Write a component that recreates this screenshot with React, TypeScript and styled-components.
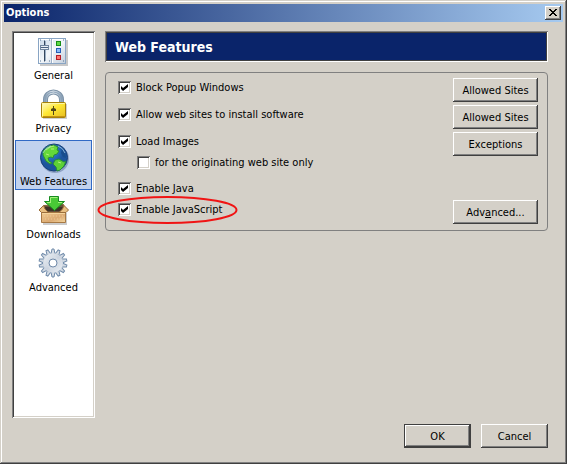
import React from "react";
import styled, { createGlobalStyle, css } from "styled-components";

const face = "#d4d0c8";
const shadow = "#808080";
const dark = "#404040";
const light = "#ffffff";
const navy = "#0a246a";

const GlobalStyle = createGlobalStyle`
  *, *::before, *::after { box-sizing: border-box; }
  body { margin: 0; background: ${face}; }
  body, button, input {
    font-family: "DejaVu Sans Condensed", Tahoma, "Noto Sans", sans-serif;
    font-size: 11px;
    line-height: 13px;
    color: #000;
  }
`;

const raised = css`
  border: 0;
  background: ${face};
  box-shadow: inset -1px -1px ${dark}, inset 1px 1px ${light}, inset -2px -2px ${shadow};
`;

const Dialog = styled.main`
  display: flex;
  flex-direction: column;
  min-height: 100vh;
  padding: 4px;
  background: ${face};
  box-shadow: inset -1px -1px ${dark}, inset 1px 1px ${face}, inset -2px -2px ${shadow},
    inset 2px 2px ${light};
`;

const TitleBar = styled.header`
  display: flex;
  align-items: center;
  justify-content: space-between;
  height: 18px;
  padding: 0 2px;
  background: linear-gradient(to right, ${navy}, #a6caf0);
`;

const Title = styled.h1`
  margin: 0;
  font-size: 11px;
  font-weight: bold;
  line-height: 18px;
  color: #fff;
`;

const CloseButton = styled.button`
  ${raised}
  display: grid;
  place-items: center;
  width: 16px;
  height: 14px;
  padding: 0 1px 1px 0;
`;

const Content = styled.div`
  display: flex;
  flex: 1;
  gap: 10px;
  padding: 9px 15px 0 8px;
`;

const Sidebar = styled.nav`
  display: flex;
  flex-direction: column;
  gap: 3px;
  width: 83px;
  min-height: 387px;
  padding: 3px;
  background: #fff;
  box-shadow: inset 1px 1px ${shadow}, inset -1px -1px ${light}, inset 2px 2px ${dark},
    inset -2px -2px ${face};
`;

const Category = styled.button<{ $active?: boolean }>`
  display: flex;
  flex-direction: column;
  align-items: center;
  gap: 1px;
  height: 50px;
  padding: 1px 0;
  border: 1px solid ${(p) => (p.$active ? "#316ac5" : "transparent")};
  background: ${(p) => (p.$active ? "#c1d2ee" : "transparent")};
  white-space: nowrap;

  svg { display: block; flex: none; }
`;

const Panel = styled.section`
  display: flex;
  flex: 1;
  flex-direction: column;
  gap: 10px;
  min-width: 0;
`;

const Heading = styled.h2`
  margin: 0;
  padding: 1px 10px 0;
  font-size: 14px;
  font-weight: bold;
  line-height: 30px;
  color: #fff;
  background: ${navy};
  box-shadow: inset 1px 1px ${shadow}, inset -1px -1px ${light}, inset 2px 2px ${dark},
    inset -2px -2px ${dark};
`;

const Group = styled.div`
  display: flex;
  flex-direction: column;
  gap: 3px;
  padding: 5px 9px 6px 12px;
  border: 1px solid ${shadow};
  border-radius: 4px;
`;

const Row = styled.div`
  display: flex;
  align-items: flex-start;
  justify-content: space-between;
  height: 24px;
`;

const NestedRow = styled.div`
  display: flex;
  margin: -3px 0 10px;
  padding-left: 19px;
`;

const JavaRows = styled.div`
  display: flex;
  align-items: flex-end;
  justify-content: space-between;
`;

const JavaOptions = styled.div`
  display: flex;
  flex-direction: column;
  gap: 8px;
  padding-bottom: 8px;
`;

const CheckLabel = styled.label<{ $offset?: boolean }>`
  position: relative;
  display: flex;
  align-items: center;
  gap: 5px;
  margin-top: ${(p) => (p.$offset ? "3px" : "0")};
  white-space: nowrap;
`;

const CheckBox = styled.input`
  appearance: none;
  width: 13px;
  height: 13px;
  margin: 0;
  background: #fff;
  box-shadow: inset 1px 1px ${shadow}, inset -1px -1px ${light}, inset 2px 2px ${dark},
    inset -2px -2px ${face};

  &:checked::before {
    content: "";
    display: block;
    width: 7px;
    height: 7px;
    margin: 3px;
    background: #000;
    clip-path: polygon(0 29%, 29% 57%, 100% 0, 100% 43%, 29% 100%, 0 71%);
  }
`;

const Highlight = styled.svg`
  position: absolute;
  top: -8px;
  left: -21px;
  width: 141px;
  height: 30px;
  overflow: visible;
  pointer-events: none;
`;

const PushButton = styled.button<{ $width: number; $primary?: boolean }>`
  ${raised}
  width: ${(p) => p.$width}px;
  height: 24px;
  padding: 0;
  white-space: nowrap;
  ${(p) =>
    p.$primary &&
    css`
      box-shadow: inset 0 0 0 1px ${dark}, inset -2px -2px ${dark}, inset 2px 2px ${light},
        inset -3px -3px ${shadow};
    `}
`;

const Footer = styled.footer`
  display: flex;
  justify-content: flex-end;
  gap: 10px;
  padding: 6px 15px 12px;
`;

const GeneralIcon = () => (
  <svg width="32" height="32" viewBox="0 0 32 32" aria-hidden="true">
    <defs>
      <linearGradient id="panel" x2="1" y2="1">
        <stop stopColor="#c8d7e8" /><stop offset=".5" stopColor="#f2f6fa" /><stop offset="1" stopColor="#c4cedb" />
      </linearGradient>
    </defs>
    <path d="M2 29h27V4" fill="none" stroke="#c8c8c8" strokeWidth="2" />
    <rect x=".5" y="2.5" width="27" height="25" fill="url(#panel)" stroke="#89a5c4" />
    <path d="M1.5 26.5v-23H26" fill="none" stroke="#fff" />
    <path d="M13.5 3v24" stroke="#9eb1c8" /><path d="M14.5 3v24" stroke="#fff" />
    <path d="M6.5 4.5v21" stroke="#34465e" /><path d="M7.5 5v20" stroke="#9cb0c6" />
    <rect x="2.5" y="9.5" width="8" height="4" fill="#e8eef5" stroke="#71859f" />
    <path d="M3 11.5h7" stroke="#4c6280" />
    <rect x="18" y="5" width="5" height="5" fill="#168e16" /><rect x="19" y="6" width="3" height="3" fill="#60d947" />
    <rect x="18" y="12" width="5" height="5" fill="#245fb8" /><rect x="19" y="13" width="3" height="3" fill="#87baf8" />
    <rect x="18" y="19" width="5" height="5" fill="#b51d27" /><rect x="19" y="20" width="3" height="3" fill="#ff7770" />
    <path d="M2 4h1M11 4h1M2 25h1M11 25h1M25 4h1M25 25h1" stroke="#53718e" />
  </svg>
);

const PrivacyIcon = () => (
  <svg width="32" height="32" viewBox="0 0 32 32" aria-hidden="true">
    <defs>
      <linearGradient id="brass" x2="1" y2="1">
        <stop stopColor="#fffbd2" /><stop offset=".45" stopColor="#ffe936" /><stop offset="1" stopColor="#e6bc20" />
      </linearGradient>
      <linearGradient id="steel" x2="1">
        <stop stopColor="#8fa5ba" /><stop offset=".45" stopColor="#e8eff4" /><stop offset="1" stopColor="#8fa5ba" />
      </linearGradient>
    </defs>
    <path d="M5 29h23V15" fill="none" stroke="#d0d0d0" strokeWidth="2" />
    <path d="M7.5 16V10.500a8 7.500 0 0 1 16 0V16" fill="none" stroke="#7c92a8" strokeWidth="5" />
    <path d="M7.5 16V10.500a8 7.500 0 0 1 16 0V16" fill="none" stroke="url(#steel)" strokeWidth="3" />
    <path d="M7.5 14V10.500a8 7.500 0 0 1 16 0V14" fill="none" stroke="#8aa1b8" />
    <rect x="3.5" y="13.5" width="24" height="15" rx="1" fill="url(#brass)" stroke="#a78208" />
    <path d="M4.5 27V14.5h22" fill="none" stroke="#fff6a2" />
    <path d="M5 27.5h22" stroke="#c49215" />
    <path d="M15 17h1v2l2 1v2h-2v4h-1v-4h-2v-2l2-1z" fill="#514619" />
  </svg>
);

const GlobeIcon = () => (
  <svg width="32" height="32" viewBox="0 0 32 32" aria-hidden="true">
    <defs>
      <radialGradient id="ocean" cx=".35" cy=".25">
        <stop stopColor="#8fc2ee" /><stop offset=".5" stopColor="#2873c4" /><stop offset="1" stopColor="#1d559c" />
      </radialGradient>
    </defs>
    <circle cx="17" cy="17" r="14" fill="#788db0" opacity=".7" />
    <circle cx="16" cy="15.5" r="13.5" fill="url(#ocean)" stroke="#173f78" />
    <path d="M7 7l4-3 5-1 4 2-1 3 2 1-2 3-3 1-1 3-2-1-3 1 1 3 3 2-2 1-4-3-3-6v-4z" fill="#64d83b" stroke="#2b8e35" />
    <path d="M17 18l4-1 5 3 2-1-2 5-4 4-3 1-1-4-3-3z" fill="#5ed036" stroke="#26883e" />
    <path d="M24 7l3 4 1 5-3-1-2-4z" fill="#174d8d" />
    <path d="M8 8l4-3 4-1M8 12l3 1M13 7h3M20 20l3 1" fill="none" stroke="#b4ef7a" />
    <path d="M5 11a12 12 0 0 1 8-7M20 4a12 12 0 0 1 7 7" fill="none" stroke="#b5d8ef" opacity=".7" />
  </svg>
);

const DownloadIcon = () => (
  <svg width="32" height="32" viewBox="0 0 32 32" aria-hidden="true">
    <defs>
      <linearGradient id="carton" y2="1" x2="1">
        <stop stopColor="#f0ca91" /><stop offset=".6" stopColor="#dcab74" /><stop offset="1" stopColor="#f5d79f" />
      </linearGradient>
    </defs>
    <path d="M5 29h23V18" fill="none" stroke="#ccc" strokeWidth="2" />
    <path d="M5.5 10.5l20-1 2 6v5h-24v-5z" fill="#65503a" stroke="#8a6338" />
    <path d="M7 13h18M6 15h20" stroke="#3e3128" strokeWidth="2" />
    <path d="M3.5 17.5h24v10h-24z" fill="url(#carton)" stroke="#a77945" />
    <path d="M5.5 10.5L1 15l2.500 2.500h7L7 14zM26 10.500l4.500 4.500-2.500 2.500h-7l3.500-3.500z" fill="#e8bf82" stroke="#9b6d3b" />
    <path d="M4 18.5h23" stroke="#f4d49d" /><path d="M6 21h20M7 24h17" stroke="#edca97" strokeDasharray="1 2" />
    <path d="M11.5 1.5h9v5h6l-10 9-10-9h5z" fill="#49c936" stroke="#178b21" />
    <path d="M12.5 7V2.5h7M9 7.5h4M20 7.5h4" fill="none" stroke="#a5f07b" />
  </svg>
);

const teeth = Array.from({ length: 14 }, (_, i) => (i * 360) / 14);

const GearIcon = () => (
  <svg width="32" height="32" viewBox="0 0 32 32" aria-hidden="true">
    <defs>
      <linearGradient id="metal" x2="1" y2="1">
        <stop stopColor="#f0f3f6" /><stop offset=".5" stopColor="#ccd4df" /><stop offset="1" stopColor="#eef2f6" />
      </linearGradient>
    </defs>
    <g fill="#d3dae3" stroke="#708baa">
      {teeth.map((angle) => (
        <path key={angle} d="M13 6l1-5h2l1 5z" transform={`rotate(${angle} 15 15)`} />
      ))}
    </g>
    <circle cx="15" cy="15" r="10" fill="url(#metal)" />
    <circle cx="15" cy="15" r="6" fill="none" stroke="#d9e1e9" />
    <circle cx="15" cy="15" r="4" fill="#fff" stroke="#718baa" />
  </svg>
);

const categories = [
  { name: "General", Icon: GeneralIcon },
  { name: "Privacy", Icon: PrivacyIcon },
  { name: "Web Features", Icon: GlobeIcon },
  { name: "Downloads", Icon: DownloadIcon },
  { name: "Advanced", Icon: GearIcon },
];

const settings = [
  { id: "popups", label: "Block Popup Windows", action: "Allowed Sites" },
  { id: "install", label: "Allow web sites to install software", action: "Allowed Sites" },
  { id: "images", label: "Load Images", action: "Exceptions" },
];

export default function App() {
  return (
    <>
      <GlobalStyle />
      <Dialog>
        <TitleBar>
          <Title>Options</Title>
          <CloseButton aria-label="Close">
            <svg width="8" height="7" viewBox="0 0 8 7" shapeRendering="crispEdges" aria-hidden="true">
              <path d="M0 0h2v1h1v1h2V1h1V0h2v1H7v1H6v1H5v1h1v1h1v1h1v1H6V6H5V5H3v1H2v1H0V6h1V5h1V4h1V3H2V2H1V1H0z" />
            </svg>
          </CloseButton>
        </TitleBar>
        <Content>
          <Sidebar aria-label="Categories">
            {categories.map(({ name, Icon }) => (
              <Category key={name} $active={name === "Web Features"}>
                <Icon />
                {name}
              </Category>
            ))}
          </Sidebar>
          <Panel>
            <Heading>Web Features</Heading>
            <Group>
              {settings.map(({ id, label, action }) => (
                <Row key={id}>
                  <CheckLabel htmlFor={id} $offset>
                    <CheckBox id={id} type="checkbox" defaultChecked />
                    {label}
                  </CheckLabel>
                  <PushButton $width={85}>{action}</PushButton>
                </Row>
              ))}
              <NestedRow>
                <CheckLabel htmlFor="originating">
                  <CheckBox id="originating" type="checkbox" />
                  for the originating web site only
                </CheckLabel>
              </NestedRow>
              <JavaRows>
                <JavaOptions>
                  <CheckLabel htmlFor="java">
                    <CheckBox id="java" type="checkbox" defaultChecked />
                    Enable Java
                  </CheckLabel>
                  <CheckLabel htmlFor="javascript">
                    <CheckBox id="javascript" type="checkbox" defaultChecked />
                    Enable JavaScript
                    <Highlight viewBox="0 0 141 30" aria-hidden="true">
                      <ellipse cx="70.5" cy="15" rx="69" ry="13" fill="none" stroke="#f01414" strokeWidth="2" />
                    </Highlight>
                  </CheckLabel>
                </JavaOptions>
                <PushButton $width={85}>
                  Adv<u>a</u>nced...
                </PushButton>
              </JavaRows>
            </Group>
          </Panel>
        </Content>
        <Footer>
          <PushButton $width={67} $primary>OK</PushButton>
          <PushButton $width={67}>Cancel</PushButton>
        </Footer>
      </Dialog>
    </>
  );
}
